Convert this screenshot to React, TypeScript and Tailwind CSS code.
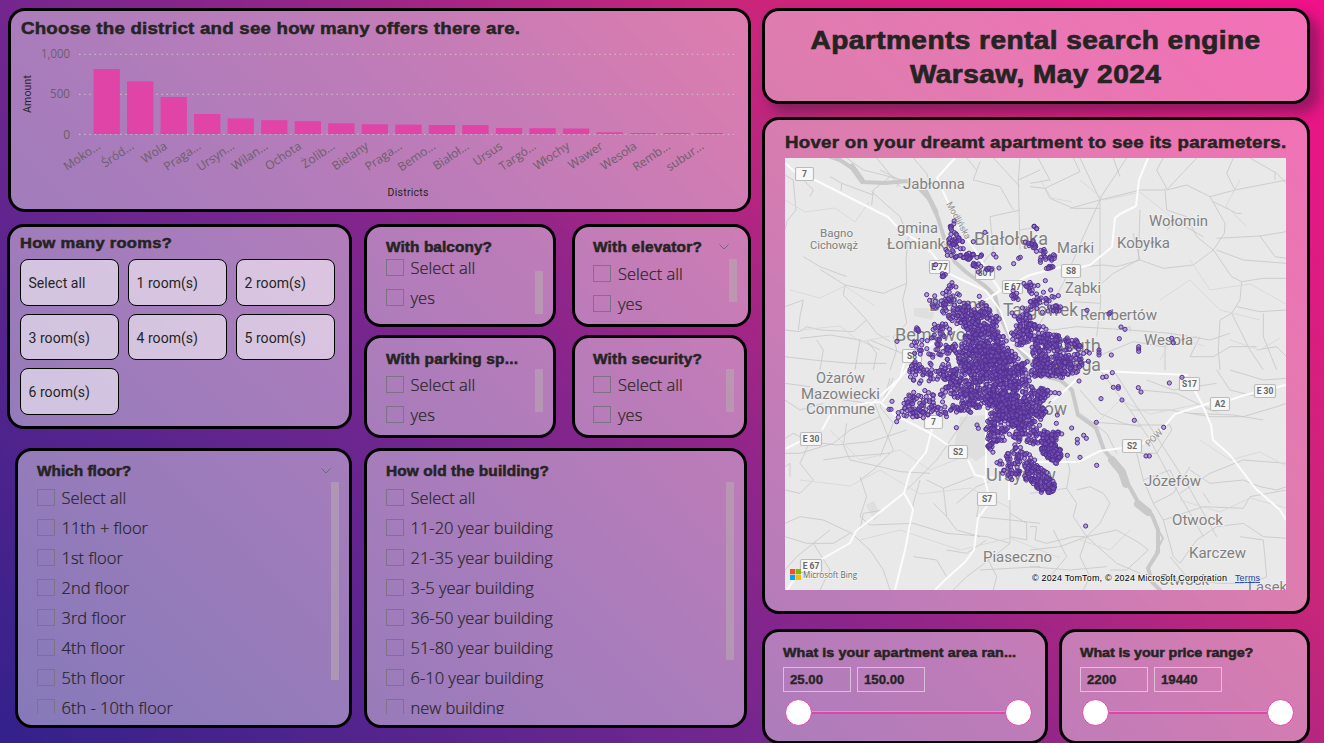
import React from "react";

const TITLE =
  "font-['Liberation_Sans',Arial,sans-serif] font-bold text-[#252423] whitespace-nowrap scale-x-110 origin-left [-webkit-text-stroke:0.5px_#252423]";

function Card({ className, children }: { className: string; children: React.ReactNode }) {
  return <section className={`border-[3px] border-black rounded-[17px] bg-white/40 overflow-hidden shrink-0 ${className}`}>{children}</section>;
}

/* ---------- District chart ---------- */

// [label, top of the bar]
const districts: [string, number][] = [
  ["Moko...", 69], ["Śród...", 81.4], ["Wola", 97], ["Praga...", 114], ["Ursyn...", 118.4],
  ["Wilan...", 120.2], ["Ochota", 121.2], ["Żolib...", 123.3], ["Bielany", 124.3], ["Praga...", 124.6],
  ["Bemo...", 125], ["Białoł...", 125.1], ["Ursus", 128], ["Targó...", 128.2], ["Włochy", 128.5],
  ["Wawer", 132.3], ["Wesoła", 133], ["Remb...", 133], ["subur...", 133],
];

function DistrictChart() {
  return (
    <svg className="block w-[737px] h-[160px] font-['Open_Sans','Noto_Sans',sans-serif]" viewBox="11 42 737 160">
      {[54.3, 94.3, 134.3].map((y) => (
        <line key={y} x1="79" x2="734" y1={y} y2={y} stroke="#d0c6c6" strokeWidth="1" strokeDasharray="1.4 3.75" />
      ))}
      {districts.map(([, y], i) => (
        <rect key={i} x={93.5 + i * 33.53} y={y} width="26.3" height={134 - y} fill="#e044a7" />
      ))}
      <g fontSize="12" fill="#6b5e6a" textAnchor="end">
        <text x="70" y="58" textLength="29" lengthAdjust="spacingAndGlyphs">1,000</text>
        <text x="70" y="98" textLength="20" lengthAdjust="spacingAndGlyphs">500</text>
        <text x="70" y="139">0</text>
        {districts.map(([name], i) => (
          <text key={i} transform={`translate(${101 + i * 33.53} 148) rotate(-34)`}>{name}</text>
        ))}
      </g>
      <g className="font-[Roboto,sans-serif]" fontSize="10.5" fill="#252423" textAnchor="middle">
        <text transform="translate(31 94) rotate(-90)" textLength="38">Amount</text>
        <text x="408" y="196" textLength="41">Districts</text>
      </g>
    </svg>
  );
}

/* ---------- Check list slicers ---------- */

function CheckRow({ label }: { label: string }) {
  return (
    <label className="flex items-center h-[30px] shrink-0">
      <span className="w-[18px] h-[17px] border border-[#7d7385] shrink-0" />
      <span className="ml-[7px] pt-[2px] text-[16.5px] leading-none font-['Open_Sans','Noto_Sans',sans-serif] font-light text-[#252423] whitespace-nowrap [-webkit-text-stroke:0.2px_#252423]">
        {label}
      </span>
    </label>
  );
}

function Chevron() {
  return (
    <svg className="w-[10px] h-[6px]" viewBox="0 0 10 6" fill="none" stroke="#6f6678" strokeWidth="1">
      <path d="M.5 .5 5 5 9.5 .5" />
    </svg>
  );
}

interface SlicerProps {
  title: string;
  items: string[];
  card: string;
  titleClass: string;
  list: string;
  bar: string;
  chevron?: boolean;
}

function Slicer({ title, items, card, titleClass, list, bar, chevron }: SlicerProps) {
  return (
    <Card className={`flex flex-col ${card}`}>
      <header className="flex items-center justify-between h-[16px] pr-[8px] shrink-0">
        <h2 className={`${TITLE} text-[14px] leading-[16px] ${titleClass}`}>{title}</h2>
        {chevron && <Chevron />}
      </header>
      <div className="flex justify-between">
        <div className={`flex flex-col overflow-hidden ${list}`}>
          {items.map((t) => <CheckRow key={t} label={t} />)}
        </div>
        <div className={`w-[8px] bg-[#b7a8b0]/60 shrink-0 ${bar}`} />
      </div>
    </Card>
  );
}

/* ---------- Range slicers ---------- */

function RangeSlicer({ title, titleClass, from, to, card }: { title: string; titleClass: string; from: string; to: string; card: string }) {
  const box = "flex items-center w-[68px] h-[25px] border-[1.5px] border-white/50 pl-[6px]";
  const value =
    "font-['Liberation_Sans',Arial,sans-serif] font-bold text-[12px] text-[#252423] scale-x-110 origin-left [-webkit-text-stroke:0.3px_#252423]";
  return (
    <Card className={`pl-[18px] pt-[13px] ${card}`}>
      <h2 className={`${TITLE} text-[13px] leading-[16px] ${titleClass}`}>{title}</h2>
      <div className="flex gap-[6px] mt-[6px]">
        <div className={box}><span className={value}>{from}</span></div>
        <div className={box}><span className={value}>{to}</span></div>
      </div>
      <div className="flex items-center mt-[7px] ml-[2px] mr-[13px]">
        <span className="w-[27px] h-[27px] rounded-full bg-white border-[1.5px] border-[#e044a7] shrink-0" />
        <span className="grow h-[3px] border-t border-[#e88bc6] bg-[#e044a7]" />
        <span className="w-[27px] h-[27px] rounded-full bg-white border-[1.5px] border-[#e044a7] shrink-0" />
      </div>
    </Card>
  );
}

/* ---------- Map ---------- */

// [centre x, centre y, radius x, radius y, count]
const clusters: [number, number, number, number, number][] = [
  [953, 226, 3, 7, 8], [955, 240, 9, 8, 24], [957, 253, 12, 6, 18], [972, 256, 10, 5, 16], [977, 266, 4, 5, 8],
  [989, 269, 3, 2, 4], [943, 275, 3, 2, 5], [952, 290, 8, 7, 10], [943, 302, 13, 10, 22], [956, 308, 15, 9, 28],
  [966, 316, 18, 9, 44], [980, 322, 18, 12, 76], [985, 308, 7, 6, 14], [972, 328, 10, 8, 24],
  [918, 329, 2, 4, 5], [940, 332, 13, 8, 22], [930, 348, 18, 9, 30], [914, 367, 8, 6, 14], [922, 375, 12, 9, 18],
  [952, 355, 13, 10, 30], [938, 372, 15, 11, 22], [988, 342, 18, 14, 110], [985, 358, 26, 14, 170],
  [980, 374, 34, 12, 160], [1004, 366, 22, 15, 150], [1018, 378, 12, 14, 66], [962, 390, 18, 9, 50],
  [978, 398, 18, 10, 80], [965, 407, 14, 6, 32], [909, 400, 6, 7, 16], [920, 413, 12, 5, 26], [930, 400, 14, 9, 24],
  [906, 413, 5, 6, 8], [945, 410, 14, 7, 20], [1002, 392, 16, 12, 100], [1010, 408, 22, 14, 165],
  [1006, 424, 20, 12, 105], [1026, 418, 16, 14, 76], [1035, 396, 13, 10, 46], [1042, 392, 8, 4, 20],
  [1040, 412, 6, 5, 18], [1034, 434, 16, 10, 46], [994, 436, 6, 9, 26], [990, 449, 4, 5, 12],
  [1049, 446, 8, 12, 76], [1055, 455, 7, 8, 50], [1056, 434, 6, 4, 12], [1018, 455, 13, 8, 28],
  [1020, 466, 20, 9, 44], [1034, 473, 12, 8, 52], [1043, 484, 10, 8, 58], [1010, 474, 10, 7, 14],
  [1048, 489, 8, 4, 20], [1026, 326, 10, 10, 30], [1022, 335, 11, 10, 36], [1036, 331, 11, 10, 30],
  [1014, 296, 6, 5, 10], [1030, 288, 8, 6, 14], [1034, 302, 6, 9, 12], [1042, 302, 12, 12, 18], [1056, 309, 6, 4, 12],
  [1033, 246, 4, 5, 10], [1040, 255, 7, 7, 12], [1052, 257, 3, 3, 8], [1049, 267, 4, 2, 8], [1022, 314, 12, 8, 14],
  [1050, 338, 10, 5, 28], [1043, 345, 12, 7, 32], [1060, 347, 15, 9, 34], [1042, 361, 9, 9, 56], [1056, 363, 15, 9, 50],
  [1072, 364, 11, 9, 32], [1074, 351, 10, 8, 16], [1046, 372, 20, 5, 46], [1064, 373, 9, 6, 16], [1036, 349, 5, 5, 12],
  [1070, 343, 8, 4, 8], [1008, 400, 14, 8, 50], [950, 375, 10, 9, 22], [968, 343, 8, 9, 18], [1012, 440, 14, 6, 12],
];

// Single offers outside the clusters, grouped by map quadrant in thirds of a pixel.
const singles: [number, number, number[]][] = [
  [780, 150, [615, 247, 580, 275, 641, 313, 648, 321, 657, 354, 467, 344, 440, 434, 351, 574, 763, 229, 770, 236, 716, 325, 721, 322, 701, 341, 598, 439, 516, 398, 538, 435, 403, 577, 595, 366, 627, 355, 634, 360, 736, 276, 745, 280]],
  [1030, 150, [12, 229, 20, 236, 46, 392, 62, 420, 85, 437, 171, 481, 240, 488, 237, 492, 273, 531, 285, 538, 268, 566, 425, 565, 430, 578, 326, 590, 326, 597, 326, 604, 244, 615, 207, 600, 207, 608, 207, 615, 142, 577, 175, 634, 115, 573, 170, 604, 178, 609]],
  [780, 370, [336, 94, 327, 118, 333, 118, 355, 128, 355, 142, 350, 155, 529, 173, 591, 165, 595, 175, 401, 67, 651, 278, 659, 282]],
  [1030, 370, [147, 33, 218, 22, 229, 20, 247, 8, 250, 52, 265, 50, 265, 55, 325, 53, 333, 66, 213, 86, 276, 90, 313, 151, 199, 157, 418, 39, 456, 22, 401, 172, 348, 258, 358, 258, 200, 286, 150, 262, 112, 256, 142, 208, 142, 219, 161, 196, 169, 205, 125, 174, 79, 160, 82, 135, 87, 70, 75, 68, 167, 468]],
];

function buildOffers(): [number, number][] {
  let seed = 20240501;
  const rnd = () => {
    seed = (Math.imul(seed, 1664525) + 1013904223) >>> 0;
    return seed / 4294967296;
  };
  const out: [number, number][] = [];
  for (const [cx, cy, rx, ry, n] of clusters) {
    for (let i = 0; i < n; i++) {
      const a = rnd() * Math.PI * 2;
      const r = Math.sqrt(rnd()) * (0.85 + rnd() * 0.3);
      out.push([cx + Math.cos(a) * r * rx, cy + Math.sin(a) * r * ry]);
    }
  }
  for (const [ox, oy, list] of singles) {
    for (let i = 0; i < list.length; i += 2) out.push([ox + list[i] / 3, oy + list[i + 1] / 3]);
  }
  return out;
}
const offers = buildOffers();

// [text, x, baseline, length, size]
const places: [string, number, number, number, number][] = [
  ["Jabłonna", 903, 189, 62, 15], ["gmina", 897, 233, 41, 15], ["Łomianki", 887, 249, 62, 15],
  ["Bagno", 820, 237, 33, 11.5], ["Cichowąż", 810, 249, 48, 11.5], ["Białołęka", 974, 245, 74, 18],
  ["Marki", 1057, 253, 37, 15], ["Wołomin", 1149, 226, 59, 15], ["Kobyłka", 1117, 248, 53, 15],
  ["Ząbki", 1065, 293, 36, 15], ["Rembertów", 1080, 320, 77, 15], ["Wesoła", 1144, 345, 49, 15],
  ["Bielany", 929, 311, 57, 18], ["Targówek", 1003, 316, 75, 18], ["Bemowo", 895, 341, 71, 18],
  ["South", 1053, 352, 48, 18], ["Praga", 1055, 371, 46, 18], ["Wola", 955, 366, 38, 18],
  ["Ochota", 951, 392, 48, 18], ["Mokotów", 995, 415, 72, 18], ["Ursynów", 986, 481, 70, 18],
  ["Ożarów", 816, 383, 49, 15], ["Mazowiecki", 801, 399, 79, 15], ["Commune", 806, 414, 69, 15],
  ["Piaseczno", 983, 562, 69, 15], ["Józefów", 1144, 486, 57, 15], ["Otwock", 1172, 525, 51, 15],
  ["Karczew", 1189, 558, 57, 15], ["Otwock", 1159, 585, 50, 15], ["Wielki", 1163, 601, 42, 15], ["Lasek", 1248, 592, 39, 15],
];

// [text, x, y, width]
const shields: [string, number, number, number][] = [
  ["7", 795, 167, 19], ["E 77", 929, 260, 21], ["801", 975, 266, 20], ["E 67", 1002, 280, 21], ["S8", 1061, 264, 20],
  ["S8", 902, 349, 20], ["7", 924, 415, 19], ["E 30", 800, 432, 22], ["S2", 948, 445, 20], ["S7", 977, 492, 20],
  ["E 67", 800, 559, 22], ["S17", 1179, 377, 21], ["E 30", 1254, 384, 22], ["A2", 1210, 397, 20], ["S2", 1122, 439, 20],
];

function OffersMap() {
  return (
    <svg className="block w-[501px] h-[432px] font-[Roboto,'Open_Sans',sans-serif]" viewBox="785 158 501 432">
      <rect x="785" y="158" width="501" height="432" fill="#e9e9e9" />
      <g fill="#dfdfdf">
        <path d="M914 308h22l-4 12-18-4zM960 417l26-2 2 38-12 8-22-14zM866 505l8-4 6 14-6 6z" />
      </g>
      {/* minor roads */}
      <g fill="none" stroke="#c9c9c9" strokeWidth="2.6" strokeLinejoin="round">
        <g transform="translate(780 150) scale(.33333)">
          <path d="M200 24 250 60 310 75 400 100M290 24 360 110M275 165 280 120 330 80M275 125 360 200 385 260 378 330 380 400 368 450 380 520 340 560 350 600 330 660M15 75 40 90 48 180 20 215 15 240M150 80 185 100 183 122M185 100 280 135M120 358 195 405 190 435 260 510 290 550 330 575M195 405 310 430 380 400M15 470 70 450 60 500 55 540M15 540 60 545 80 530 120 540 220 545 260 510M60 565 150 555 240 570 300 600M110 570 130 600 120 660M240 570 225 660M15 620 100 630 210 640 320 640M70 320 120 350 200 380M260 570 290 610 280 660M600 35 580 90 660 110 700 180M720 24 715 90 720 300M640 24 720 110M715 90 780 60M560 24 590 60M630 200 720 180M630 200 640 300 600 350M400 24 440 70 450 100M720 240 780 230M300 60 360 90 350 110M70 90 100 120 90 140M270 570 390 620" />
        </g>
        <g transform="translate(1030 150) scale(.33333)">
          <path d="M0 110 45 115 150 65 130 24M45 115 60 145 130 175 210 175M150 24 210 150 160 260 100 400 30 520M290 24 210 145 210 380 212 460 200 560M210 150 330 120 400 120 410 115 380 60 400 24M210 150 120 175M410 120 470 105 540 140 585 220 583 250 550 300 500 260 470 200 410 180 405 120M410 120 500 24M540 140 615 120 590 70 610 24M615 120 770 90M550 300 605 380 635 395 630 450 605 490 570 510 565 600 570 660M635 395 700 385 770 385M330 330 400 355 490 345 550 300M560 265 690 258 770 245M690 258 735 320 770 325M660 24 740 70 770 100M735 70 735 90M330 180 325 330 250 370 215 400M160 350 220 345 260 350 330 330 310 250M410 240 440 215 520 260M550 155 620 190 635 190M210 460 130 455 120 460M0 530 70 540 140 530 300 540 420 550 540 570 600 550M260 540 300 530 300 545M200 620 310 575 400 590 500 560M405 660 405 580M480 620 550 620 600 590 680 590M605 490 660 600 700 660M620 470 690 485 770 480M700 490 700 560 740 660M480 620 510 560M24 24 60 90 0 100M250 24 270 80M560 300 640 330 770 340M680 600 740 590 770 620" />
        </g>
        <g transform="translate(780 370) scale(.33333)">
          <path d="M15 40 90 50 130 80 190 90 270 100 320 60 330 24M15 90 60 120 130 100M15 205 40 190 90 215 170 225 270 215 320 200 380 180M15 250 60 250 160 220M160 220 210 180 300 140M200 160 190 225 210 270 300 290 360 305 450 310M90 215 60 280 100 330 60 370 15 360M340 24 300 110 340 160 300 260M280 90 340 240 280 300 240 330M130 270 200 260 330 250M380 360 470 270 560 140 600 60M440 330 490 355 500 440 530 480 600 500M490 355 580 320M530 400 590 350 640 330M420 330 400 400 390 480M270 465 400 460 500 490 620 500 690 520M215 490 130 450 60 440 15 460M215 490 270 540 310 600 330 660M270 465 240 440 260 380 240 320M15 500 80 520 160 520 210 490M100 520 150 600 120 660M15 600 50 560 150 480M600 380 590 440 690 450 780 460M690 390 690 520 640 560 560 620 520 660M500 540 560 550 620 510M690 430 740 460 740 510 690 500M600 600 780 590M620 560 650 620 640 660M400 560 470 570 500 620M15 290 30 280 30 320M310 420 250 430 240 480M460 400 500 440" />
        </g>
        <g transform="translate(1030 370) scale(.33333)">
          <path d="M0 370 110 355 120 300 105 250M110 355 140 400 130 440 170 500M170 500 90 530 0 540M170 500 210 460 240 400 220 370 180 350 140 360M170 500 260 480 330 520 355 540 290 600 240 600M170 500 150 560 180 620 160 660M170 500 260 580 330 610M0 590 120 600 230 590M150 60 210 130 280 160 330 170M210 0 300 120 360 210 440 360 520 500M250 0 320 110 380 200 470 340 560 500M150 130 230 190 260 250M170 155 310 165 420 165 425 180 380 250 330 250M300 120 420 120 540 140 640 140 740 110 770 100M330 60 440 70 540 120M480 130 610 135 700 150M350 30 430 60 560 40M320 250 340 330 420 300 440 340M340 330 370 400 430 370 480 290M370 400 400 450 430 560 450 580M400 450 520 410 640 415 660 380 770 360M450 370 540 310 640 270 770 280M480 300 540 340 640 330M450 580 500 510 560 470 640 460 700 500 770 505M420 560 470 620 560 640 640 640M630 500 700 510 710 620 660 640M640 330 690 350 740 360 770 350M540 400 520 370M70 480 110 560 60 620M0 470 20 470 15 510 50 520 130 500 165 500M560 0 600 60 680 80M600 0 700 30 770 25" />
        </g>
      </g>
      <g fill="none" stroke="#d8d8d8" strokeWidth=".9" strokeLinejoin="round">
        <path d="M785 200l20 12 30-4 20 14 14-20M790 290l30 8 25-12 30 20M800 330l40-4 20 16 30-6M830 430l30 30 40-10 30 20 30-12M800 480l50 6 30-16 40 24 50-6 40 20M860 540l40-10 60 20 50-12 50 20M1080 180l24 20 36-8 30 24M1190 260l20 30 40-6 36 20M1160 300l30-20 30 30 40 10M1100 420l20-20 30 14 50-10 20 10M1200 440l30 20 30-8 26 14M1080 540l30 10 20-20M1180 500l40 12 30-14 36 10M1040 180l12 18 20 4M1240 180l-14 26 20 20M1230 340l30 10 20-12M1160 360l14-24 30 10" />
      </g>
      {/* river */}
      <g fill="none" stroke="#c9c9c9" strokeLinejoin="round" strokeLinecap="round">
        <path strokeWidth="4" d="M822 154 840 160 852 168 862 182 885 183 908 181 918 187 930 200 938 218 946 244 955 262 966 272 985 286 995 296 1000 316 1010 338 1028 360 1040 372" />
        <path strokeWidth="5" d="M852 166 862 180M926 192 936 212" />
        <path strokeWidth="4" d="M1036 374 1060 380 1072 390 1078 415 1096 428 1104 450 1118 466 1128 484 1138 502 1152 515 1158 530 1158 552 1148 568 1152 582 1162 592" />
        <path strokeWidth="8" d="M1112 460 1122 472 1126 484M1138 504 1148 512" />
        <path strokeWidth="2" d="M1158 530 1163 538 1156 552" />
      </g>
      {/* main roads */}
      <g fill="none" stroke="#fcfcfc" strokeWidth="2" strokeLinejoin="round">
        <path d="M785 163 795 172 815 180 888 217 900 230 918 241 932 253 946 272 956 277 986 291 1000 310 1012 342 1040 365 1100 371 1188 375" />
        <path d="M955 158 937 178 947 200 955 222 975 250 990 275 1000 290 989 298 970 310 955 330 930 345 905 360 900 378 882 402" />
        <path d="M989 298 1010 285 1030 275 1061 267M1081 267 1090 265 1112 247 1115 218 1120 214 1136 206 1139 180 1148 158" />
        <path d="M785 449 801 441M822 430 832 412 866 403 880 402 895 415 930 433 948 445M968 460 975 475 984 477 988 492M987 506 978 518 974 550 965 562 945 580 935 590" />
        <path d="M932 429 926 452 910 472 904 493 880 512 856 531 850 543 822 559M904 493 913 509 905 550 895 590" />
        <path d="M787 590 795 578M986 476 986 380 1010 350M984 477 1010 478M1010 478 1030 462 1078 462 1100 451 1122 448M1142 444 1163 428 1175 414 1210 403M1230 400 1245 395 1286 385M1190 382 1202 404 1211 425 1213 440 1230 455 1255 488 1280 510 1286 520M1009 480 1009 500M1040 410 1060 395 1078 378M870 405 900 378 925 345" />
      </g>
      {places.map(([t, x, y, len, size], i) => (
        <text key={i} x={x} y={y} fontSize={size} textLength={len} lengthAdjust="spacingAndGlyphs" fill="#808080" stroke="#efefef" strokeWidth="2" paintOrder="stroke">
          {t}
        </text>
      ))}
      <text transform="translate(946 204) rotate(61)" fontSize="9" fill="#909090" textLength="41">Modlińska</text>
      <text transform="translate(1149 447) rotate(-45)" fontSize="9" fill="#909090" textLength="20">POW</text>
      {shields.map(([t, x, y, w], i) => (
        <g key={i}>
          <rect x={x + 0.5} y={y + 0.5} width={w - 1} height="13" rx="1.5" fill="#f7f7f7" stroke="#bcbcbc" strokeWidth="1.2" />
          <text x={x + w / 2} y={y + 10} fontSize="8.5" fontWeight="700" textAnchor="middle" fill="#666">{t}</text>
        </g>
      ))}
      <g fill="#7f55c6" fillOpacity=".5" stroke="#52318f" strokeWidth="1">
        {offers.map(([x, y], i) => <circle key={i} cx={x} cy={y} r="2.1" />)}
      </g>
      <rect x="790" y="569" width="5.2" height="5.2" fill="#f25022" />
      <rect x="795.8" y="569" width="5.2" height="5.2" fill="#7fba00" />
      <rect x="790" y="574.8" width="5.2" height="5.2" fill="#00a4ef" />
      <rect x="795.8" y="574.8" width="5.2" height="5.2" fill="#ffb900" />
      <text className="font-['Open_Sans',sans-serif]" x="803" y="578" fontSize="9" fontWeight="500" textLength="54" lengthAdjust="spacingAndGlyphs" fill="#666" stroke="#f4f4f4" strokeWidth="1.5" paintOrder="stroke">Microsoft Bing</text>
      <g className="font-['Liberation_Sans',Arial,sans-serif]" fontSize="9">
        <text x="1032" y="581" textLength="195" fill="#000" stroke="#ececec" strokeWidth="2" paintOrder="stroke">© 2024 TomTom, © 2024 Microsoft Corporation</text>
        <text x="1235" y="581" textLength="25" fill="#1b3fa8" textDecoration="underline">Terms</text>
      </g>
    </svg>
  );
}

/* ---------- Page ---------- */

const rooms = ["Select all", "1 room(s)", "2 room(s)", "3 room(s)", "4 room(s)", "5 room(s)", "6 room(s)"];
const floors = ["Select all", "11th + floor", "1st floor", "2nd floor", "3rd floor", "4th floor", "5th floor", "6th - 10th floor"];
const ages = [
  "Select all", "11-20 year building", "21-35 year building", "3-5 year building",
  "36-50 year building", "51-80 year building", "6-10 year building", "new building",
];
const yesNo = ["Select all", "yes"];

export default function App() {
  return (
    <main className="flex gap-[11px] w-[1324px] h-[743px] overflow-hidden pl-[8px] pt-[8px] bg-[linear-gradient(45deg,#33218b_0%,#70268f_34%,#92258a_50%,#c8267a_71%,#f01188_100%)]">
      <div className="flex flex-col w-[743px] shrink-0">
        <Card className="w-[743px] h-[204px] pt-[8px]">
          <h1 className={`${TITLE} w-[600px] text-[17px] leading-[20px] tracking-[0.2px] ml-[10px] mb-[3px]`}>
            Choose the district and see how many offers there are.
          </h1>
          <DistrictChart />
        </Card>

        <div className="flex gap-[12px] mt-[12px]">
          <Card className="-ml-px w-[345px] h-[205px] pl-[10px] pt-[6px]">
            <h2 className={`${TITLE} w-[200px] text-[15px] leading-[20px] tracking-[0.27px]`}>How many rooms?</h2>
            <div className="grid grid-cols-[99px_99px_99px] gap-x-[9px] gap-y-[8px] mt-[6px]">
              {rooms.map((r) => (
                <button key={r} className="h-[46.5px] rounded-[8px] border border-black bg-white/55 pl-[7.5px] pt-[3px] text-left font-[Roboto,sans-serif] text-[14px] tracking-[0.05px] text-[#252423]">
                  {r}
                </button>
              ))}
            </div>
          </Card>
          <div className="grid grid-cols-[192px_179px] gap-x-[16px] gap-y-[8px] content-start">
            <Slicer title="With balcony?" items={yesNo} card="w-[192px] h-[103px] pl-[18.5px] pr-[10.5px] pt-[12px]" titleClass="tracking-[0.07px]" list="-mt-[3px] h-[62px]" bar="mt-[16px] h-[43px]" />
            <Slicer title="With elevator?" items={yesNo} chevron card="w-[179px] h-[103px] pl-[18px] pr-[11px] pt-[12px]" titleClass="tracking-[0.2px]" list="mt-[3px] h-[62px]" bar="mt-[4px] h-[43px]" />
            <Slicer title="With parking sp..." items={yesNo} card="w-[192px] h-[103px] pl-[18.5px] pr-[10.5px] pt-[13px]" titleClass="tracking-[0.2px]" list="mt-[2px] h-[62px]" bar="mt-[2px] h-[43px]" />
            <Slicer title="With security?" items={yesNo} card="w-[175px] h-[103px] pl-[18px] pr-[10px] pt-[13px]" titleClass="tracking-[0.2px]" list="mt-[2px] h-[62px]" bar="mt-[2px] h-[43px]" />
          </div>
        </div>

        <div className="flex gap-[12px] mt-[10px]">
          <Slicer title="Which floor?" items={floors} chevron card="ml-[7px] w-[337px] h-[280px] pl-[18.5px] pr-[10.5px] pt-[12px]" titleClass="" list="mt-[3px] h-[232px]" bar="mt-[3px] h-[198px]" />
          <Slicer title="How old the building?" items={ages} card="w-[383px] h-[280px] pl-[18.5px] pr-[10px] pt-[12px]" titleClass="tracking-[0.1px]" list="mt-[3px] h-[232px]" bar="mt-[3px] h-[178px]" />
        </div>
      </div>

      <div className="flex flex-col w-[548px] shrink-0">
        <Card className="flex flex-col items-center justify-center pt-[2px] h-[96px] shadow-[8px_8px_12px_1px_rgba(60,25,60,0.45)]">
          <h1 className="font-['Liberation_Sans',Arial,sans-serif] font-bold text-[#252423] scale-x-110 [-webkit-text-stroke:0.7px_#252423] text-[25.5px] leading-[34px] tracking-[0.4px] text-center">
            Apartments rental search engine
            <br />
            Warsaw, May 2024
          </h1>
        </Card>
        <Card className="h-[497px] mt-[13px] pl-[20px] pt-[13px]">
          <h2 className={`${TITLE} w-[470px] text-[17px] leading-[20px] tracking-[0.24px] mb-[5px]`}>
            Hover on your dreamt apartment to see its parameters.
          </h2>
          <OffersMap />
        </Card>
        <div className="flex gap-[11px] mt-[15px]">
          <RangeSlicer title="What is your apartment area ran..." titleClass="tracking-[0.07px]" from="25.00" to="150.00" card="w-[286px] h-[115px]" />
          <RangeSlicer title="What is your price range?" titleClass="tracking-[-0.09px]" from="2200" to="19440" card="w-[251px] h-[115px]" />
        </div>
      </div>
    </main>
  );
}
